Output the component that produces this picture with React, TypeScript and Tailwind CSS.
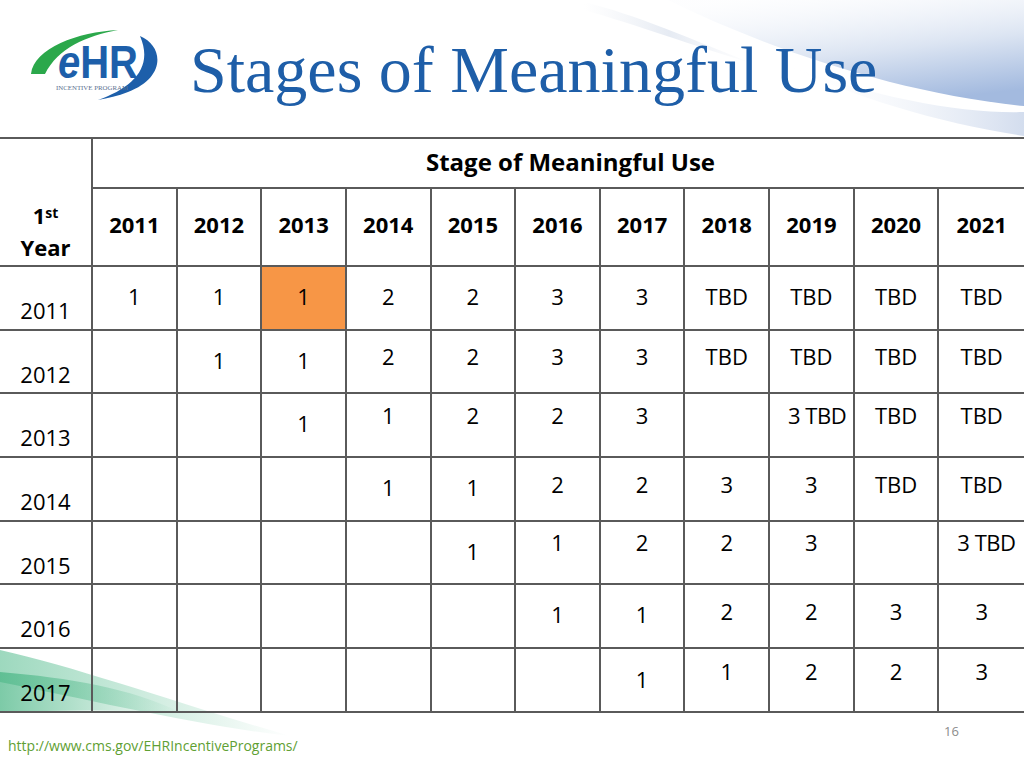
import React from "react";

type Cell = [string, number] | null;

// center offset (px from row top) -> padding class
const padFor: Record<number, string> = {
  21: "pt-[5px]",
  22: "pt-[6px]",
  23: "pt-[7px]",
  26: "pt-[10px]",
  27: "pt-[11px]",
  30: "pt-[14px]",
  31: "pt-[15px]",
};

const years = ["2011", "2012", "2013", "2014", "2015", "2016", "2017", "2018", "2019", "2020", "2021"];

const rows: { label: string; cells: Cell[] }[] = [
  {
    label: "2011",
    cells: [["1", 30], ["1", 30], ["1", 30], ["2", 30], ["2", 30], ["3", 30], ["3", 30], ["TBD", 30], ["TBD", 30], ["TBD", 30], ["TBD", 30]],
  },
  {
    label: "2012",
    cells: [null, ["1", 30], ["1", 30], ["2", 26], ["2", 26], ["3", 26], ["3", 26], ["TBD", 26], ["TBD", 26], ["TBD", 26], ["TBD", 26]],
  },
  {
    label: "2013",
    cells: [null, null, ["1", 30], ["1", 22], ["2", 22], ["2", 22], ["3", 22], null, ["3 TBD", 22], ["TBD", 22], ["TBD", 22]],
  },
  {
    label: "2014",
    cells: [null, null, null, ["1", 30], ["1", 30], ["2", 27], ["2", 27], ["3", 27], ["3", 27], ["TBD", 27], ["TBD", 27]],
  },
  {
    label: "2015",
    cells: [null, null, null, null, ["1", 30], ["1", 21], ["2", 21], ["2", 21], ["3", 21], null, ["3 TBD", 21]],
  },
  {
    label: "2016",
    cells: [null, null, null, null, null, ["1", 30], ["1", 30], ["2", 27], ["2", 27], ["3", 27], ["3", 27]],
  },
  {
    label: "2017",
    cells: [null, null, null, null, null, null, ["1", 31], ["1", 23], ["2", 23], ["2", 23], ["3", 23]],
  },
];

function Logo() {
  return (
    <svg width="134" height="74" viewBox="0 0 134 74" className="block">
      {/* green swoosh */}
      <path d="M3 46 C 6 20, 50 4, 90 2 C 58 8, 30 20, 17 46 Z" fill="#2ba84b" />
      {/* blue arc */}
      <path d="M112 8 C 136 18, 138 50, 100 64 C 90 68, 80 70, 70 72 C 104 60, 126 40, 112 8 Z" fill="#1d5faa" />
      <text
        x="30"
        y="50"
        textLength="80"
        lengthAdjust="spacingAndGlyphs"
        fontFamily="'Liberation Sans', Arial, sans-serif"
        fontWeight="700"
        fontSize="46"
        fill="#1d5faa"
      >
        <tspan fontStyle="italic">e</tspan>HR
      </text>
      <text
        x="28"
        y="62"
        textLength="72"
        lengthAdjust="spacingAndGlyphs"
        fontFamily="'Liberation Serif', serif"
        fontSize="5.5"
        fill="#5a6f8f"
      >
        INCENTIVE PROGRAM
      </text>
    </svg>
  );
}

function TopSwoosh() {
  return (
    <svg width="440" height="140" viewBox="0 0 440 140" className="absolute right-0 top-0">
      <defs>
        <linearGradient id="sw1" x1="0.2" y1="0" x2="0.6" y2="1">
          <stop offset="0" stopColor="#f6f8fc" stopOpacity="0.2" />
          <stop offset="0.55" stopColor="#dbe4f2" />
          <stop offset="1" stopColor="#a3badf" />
        </linearGradient>
        <linearGradient id="sw2" x1="0" y1="0" x2="1" y2="0">
          <stop offset="0" stopColor="#ffffff" stopOpacity="0" />
          <stop offset="1" stopColor="#d3ddee" />
        </linearGradient>
        <linearGradient id="sw3" x1="0" y1="0" x2="1" y2="0">
          <stop offset="0" stopColor="#eef1f6" stopOpacity="0" />
          <stop offset="0.5" stopColor="#e6ebf3" />
          <stop offset="1" stopColor="#eef1f6" stopOpacity="0" />
        </linearGradient>
      </defs>
      <path d="M0 2 C 50 14, 110 40, 170 64 C 110 46, 50 24, 0 10 Z" fill="url(#sw3)" />
      <path d="M84 0 L440 0 L440 106 C 320 94, 190 52, 84 0 Z" fill="url(#sw1)" />
      <path d="M200 64 C 290 98, 380 114, 440 112 L440 136 C 360 124, 270 98, 200 64 Z" fill="url(#sw2)" />
    </svg>
  );
}

function BottomSwoosh() {
  return (
    <svg width="320" height="110" viewBox="0 0 320 110" className="absolute left-0 top-[648px] pointer-events-none">
      <defs>
        <linearGradient id="gr1" x1="0" y1="0" x2="1" y2="0">
          <stop offset="0" stopColor="#5cbf93" stopOpacity="0.6" />
          <stop offset="1" stopColor="#5cbf93" stopOpacity="0" />
        </linearGradient>
        <linearGradient id="gr2" x1="0" y1="0" x2="1" y2="0">
          <stop offset="0" stopColor="#45b482" stopOpacity="0.7" />
          <stop offset="1" stopColor="#45b482" stopOpacity="0" />
        </linearGradient>
      </defs>
      <path d="M0 2 C 80 20, 180 56, 290 88 C 200 78, 90 52, 0 34 Z" fill="url(#gr1)" />
      <path d="M0 24 C 70 30, 130 40, 180 64 C 120 62, 60 62, 0 64 Z" fill="url(#gr2)" />
    </svg>
  );
}

export default function App() {
  const font = "font-['Open_Sans','Noto_Sans',sans-serif]";
  return (
    <div className={`relative w-[1024px] h-[768px] overflow-hidden bg-white text-black ${font}`}>
      <TopSwoosh />
      <BottomSwoosh />

      <header className="relative flex h-[137px] items-start">
        <div className="ml-[28px] mt-[28px]">
          <Logo />
        </div>
        <h1 className="ml-[28px] mt-[34px] whitespace-nowrap font-['Liberation_Serif',serif] text-[66px] leading-[72px] text-[#1e5ea8]">
          Stages of Meaningful Use
        </h1>
      </header>

      <div className="relative grid grid-cols-[93px_repeat(11,minmax(0,1fr))] border-t-2 border-[#5a5a5a]">
        <div className="row-span-2 flex flex-col items-center border-r-2 border-b-2 border-[#5a5a5a] pt-[58px] font-bold text-[22px] leading-[32px]">
          <div>
            1<span className="text-[14px] align-[6px]">st</span>
          </div>
          <div>Year</div>
        </div>
        <div className="col-span-11 flex h-[50px] items-center justify-center border-b-2 border-[#5a5a5a] pb-[3px] pl-[24px] text-[24px] font-bold">
          Stage of Meaningful Use
        </div>
        {years.map((y, i) => (
          <div
            key={y}
            className={`flex h-[78px] items-center justify-center border-b-2 border-[#5a5a5a] pb-[6px] text-[22px] font-bold ${i < 10 ? "border-r-2" : ""}`}
          >
            {y}
          </div>
        ))}

        {rows.map((r) => (
          <React.Fragment key={r.label}>
            <div className="h-[63.7px] border-r-2 border-b-2 border-[#5a5a5a] pt-[28px] text-center text-[22px] leading-[30px]">
              {r.label}
            </div>
            {r.cells.map((c, i) => {
              const orange = r.label === "2011" && i === 2;
              const shifted = c && c[0] === "3 TBD";
              return (
                <div
                  key={i}
                  className={`h-[63.7px] border-b-2 border-[#5a5a5a] text-[22px] leading-[30px] whitespace-nowrap ${
                    i < 10 ? "border-r-2" : ""
                  } ${orange ? "bg-[#f79646]" : ""} ${c ? padFor[c[1]] : ""} ${shifted ? "pl-[18px] text-left tracking-[-0.5px]" : "text-center"}`}
                >
                  {c ? c[0] : ""}
                </div>
              );
            })}
          </React.Fragment>
        ))}
      </div>

      <div className="absolute left-[944px] top-[722px] text-[13px] text-[#8c8c8c]">16</div>
      <div className="absolute left-[8px] top-[735px] text-[14px] text-[#5fa033]">
        http://www.cms.gov/EHRIncentivePrograms/
      </div>
    </div>
  );
}
